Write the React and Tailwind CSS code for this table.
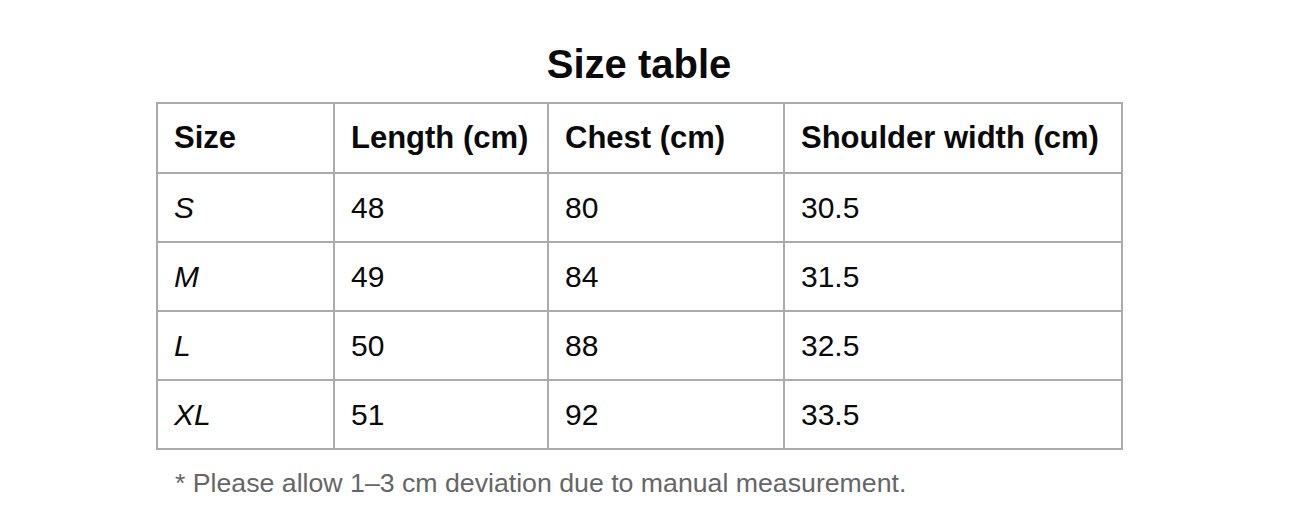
import React from 'react';

const rows = [
  { size: 'S', length: '48', chest: '80', shoulder: '30.5' },
  { size: 'M', length: '49', chest: '84', shoulder: '31.5' },
  { size: 'L', length: '50', chest: '88', shoulder: '32.5' },
  { size: 'XL', length: '51', chest: '92', shoulder: '33.5' },
];

const cell = 'border-2 border-[#ababab] px-4 text-left align-middle';

export default function App() {
  return (
    <div className="min-h-screen bg-white text-[#0a0a0a] font-['Liberation_Sans',Arial,sans-serif]">
      <div className="ml-[156px] w-[966px] pt-[40px]">
        <h1 className="text-center text-[40px] font-bold leading-[48px]">Size table</h1>
        <table className="mt-[14px] w-[965px] table-fixed border-collapse text-[30px] leading-[34px]">
          <colgroup>
            <col className="w-[177px]" />
            <col className="w-[214px]" />
            <col className="w-[236px]" />
            <col className="w-[338px]" />
          </colgroup>
          <thead>
            <tr className="h-[70px] text-[31px] font-bold">
              <th className={cell}>Size</th>
              <th className={cell}>Length (cm)</th>
              <th className={cell}>Chest (cm)</th>
              <th className={cell}>Shoulder width (cm)</th>
            </tr>
          </thead>
          <tbody>
            {rows.map((r) => (
              <tr key={r.size} className="h-[69px]">
                <td className={`${cell} italic`}>{r.size}</td>
                <td className={cell}>{r.length}</td>
                <td className={cell}>{r.chest}</td>
                <td className={cell}>{r.shoulder}</td>
              </tr>
            ))}
          </tbody>
        </table>
        <p className="mt-[17px] pl-[19px] text-[26.7px] leading-[32px] text-[#666]">
          * Please allow 1–3 cm deviation due to manual measurement.
        </p>
      </div>
    </div>
  );
}
